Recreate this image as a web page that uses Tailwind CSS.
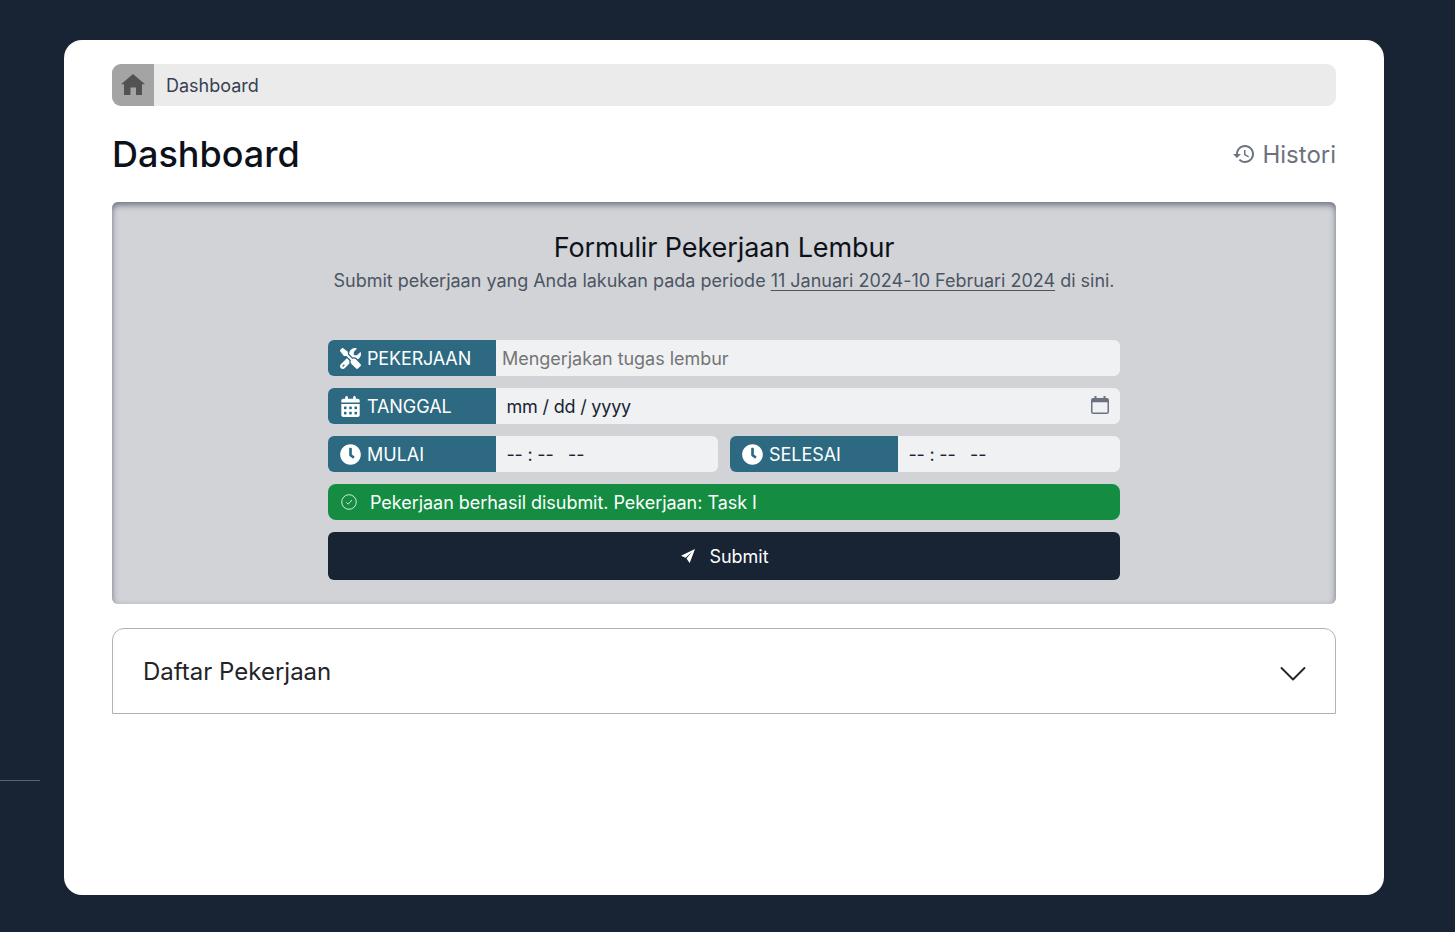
<!DOCTYPE html>
<html lang="id"><head><meta charset="utf-8"><title>Dashboard</title>
<script src="https://cdn.jsdelivr.net/npm/@tailwindcss/browser@4"></script></head>
<body class="h-[932px] overflow-hidden bg-[#182433] font-['Inter',sans-serif] text-[18px] leading-[27px]">
<div class="flex">
<aside class="flex w-16 shrink-0 flex-col pt-[780px]"><div class="h-px w-10 bg-[#5b6570]"></div></aside>
<main class="mt-10 h-[855px] w-[1320px] rounded-[18px] bg-white px-12 pt-6">
  <nav class="flex h-[42px] overflow-hidden rounded-[9px] bg-[#ebebeb] text-[#374151]">
    <div class="flex w-[42px] items-center justify-center bg-[#a4a4a4]">
      <svg class="size-6" viewBox="0 0 24 24" fill="#525252"><path d="M3 22V11.300H0L12 1 24 11.300h-3V22h-6v-7.500H9.500V22z"/></svg>
    </div>
    <span class="flex items-center pl-3">Dashboard</span>
  </nav>
  <header class="flex h-24 items-center justify-between">
    <h1 class="text-[36px] leading-[40px] font-medium text-[#0d121a]">Dashboard</h1>
    <a class="flex items-center gap-1.5 text-[24px] leading-8 text-[#6b7280]">
      <svg class="size-6" viewBox="0 0 24 24" fill="currentColor"><path d="M13 3c-4.970 0-9 4.030-9 9H1l3.890 3.890.070.140L9 12H6c0-3.870 3.130-7 7-7s7 3.130 7 7-3.130 7-7 7c-1.930 0-3.680-.790-4.940-2.060l-1.420 1.420C8.270 19.990 10.510 21 13 21c4.970 0 9-4.030 9-9s-4.030-9-9-9zm-1 5v5l4.280 2.540.720-1.210-3.500-2.080V8H12z"/></svg>
      <span class="pt-0.5">Histori</span></a>
  </header>
  <section class="flex h-[402px] flex-col items-center rounded-md bg-[#d2d3d7] pt-[31px] shadow-[inset_0_3px_6px_#6b7280]">
    <h2 class="text-[27px] leading-[30px] tracking-[-0.1px] text-[#0d121a]">Formulir Pekerjaan Lembur</h2>
    <p class="mt-1 tracking-[-0.01px] text-[#4b5563]">Submit pekerjaan yang Anda lakukan pada periode <span class="underline decoration-1 underline-offset-[3px]">11 Januari 2024-10 Februari 2024</span> di sini.</p>
    <form class="mt-[46px] flex w-[792px] flex-col gap-3">
      <div class="flex h-9 overflow-hidden rounded-md bg-[#f0f1f3]">
        <label class="flex w-[168px] items-center gap-1.5 bg-[#2d6a82] pl-3 tracking-[-0.15px] text-white">
          <svg class="size-[21px]" viewBox="0 0 512 512" fill="currentColor"><path d="M78.600 5C69.100-2.400 55.600-1.500 47 7L7 47c-8.500 8.500-9.400 22-2.100 31.600l80 104c4.500 5.900 11.600 9.400 19 9.400h54.100l109 109c-14.700 29-10 65.400 14.300 89.600l112 112c12.500 12.500 32.800 12.500 45.300 0l64-64c12.500-12.500 12.500-32.800 0-45.300l-112-112c-24.200-24.200-60.600-29-89.600-14.300l-109-109V104c0-7.500-3.500-14.500-9.400-19L78.600 5zM19.900 396.100C7.200 408.800 0 426.100 0 444.100C0 481.600 30.400 512 67.900 512c18 0 35.300-7.200 48-19.900L233.700 374.300c-7.800-20.900-9-43.600-3.600-65.100l-61.700-61.700L19.900 396.100zM512 144c0-10.500-1.100-20.700-3.200-30.500c-2.400-11.200-16.100-14.100-24.200-6l-63.900 63.900c-3 3-7.100 4.700-11.300 4.700H352c-8.800 0-16-7.200-16-16V102.600c0-4.200 1.700-8.300 4.700-11.300l63.900-63.900c8.100-8.100 5.200-21.800-6-24.200C388.700 1.100 378.500 0 368 0C288.500 0 224 64.500 224 144l0 .8 85.300 85.300c36-9.100 75.800 .5 104 28.700L429 274.500c49-23 83-72.800 83-130.500z"/><path d="M72 442l24-24" stroke="#2d6a82" stroke-width="34" stroke-linecap="round"/></svg>PEKERJAAN</label>
        <span class="flex items-center pl-1.5 tracking-[-0.04px] text-[#757575]">Mengerjakan tugas lembur</span>
      </div>
      <div class="flex h-9 overflow-hidden rounded-md bg-[#f0f1f3]">
        <label class="flex w-[168px] items-center gap-1.5 bg-[#2d6a82] pl-3 tracking-[-0.08px] text-white">
          <svg class="size-[21px]" viewBox="0 0 448 512" fill="currentColor"><path d="M128 0c17.700 0 32 14.300 32 32V64H288V32c0-17.700 14.300-32 32-32s32 14.300 32 32V64h48c26.500 0 48 21.500 48 48v48H0V112C0 85.500 21.500 64 48 64H96V32c0-17.700 14.300-32 32-32zM0 192H448V464c0 26.500-21.500 48-48 48H48c-26.500 0-48-21.500-48-48V192zm64 80v32c0 8.800 7.200 16 16 16h32c8.800 0 16-7.200 16-16V272c0-8.800-7.200-16-16-16H80c-8.800 0-16 7.200-16 16zm128 0v32c0 8.800 7.200 16 16 16h32c8.800 0 16-7.200 16-16V272c0-8.800-7.200-16-16-16H208c-8.800 0-16 7.200-16 16zm144-16c-8.800 0-16 7.200-16 16v32c0 8.800 7.200 16 16 16h32c8.800 0 16-7.200 16-16V272c0-8.800-7.200-16-16-16H336zM64 400v32c0 8.800 7.200 16 16 16h32c8.800 0 16-7.200 16-16V400c0-8.800-7.200-16-16-16H80c-8.800 0-16 7.200-16 16zm144-16c-8.800 0-16 7.200-16 16v32c0 8.800 7.200 16 16 16h32c8.800 0 16-7.200 16-16V400c0-8.800-7.200-16-16-16H208zm112 16v32c0 8.800 7.200 16 16 16h32c8.800 0 16-7.200 16-16V400c0-8.800-7.200-16-16-16H336c-8.800 0-16 7.200-16 16z"/></svg>TANGGAL</label>
        <div class="flex flex-1 items-center justify-between pr-[11px] pl-[10.500px] text-[#182433]"><span class="tracking-[-0.2px]">mm / dd / yyyy</span>
          <svg class="mb-0.5 h-[18px] w-[18px]" viewBox="0 0 18 18" fill="none" stroke="#6b7280"><rect x=".75" y="2.750" width="16.500" height="14.500" rx="1.500" stroke-width="1.500"/><path d="M1 4.500h16" stroke-width="3.500"/><path d="M4.500 0v3M13.500 0v3" stroke-width="2"/></svg></div>
      </div>
      <div class="grid grid-cols-2 gap-3">
        <div class="flex h-9 overflow-hidden rounded-md bg-[#f0f1f3]">
          <label class="flex w-[168px] items-center gap-1.5 bg-[#2d6a82] pl-3 text-white">
            <svg class="size-[21px]" viewBox="4 4 504 504" fill="currentColor"><path d="M256,8C119,8,8,119,8,256S119,504,256,504,504,393,504,256,393,8,256,8Zm92.490,313h0l-20,25a16,16,0,0,1-22.490,2.500h0l-67-49.720a40,40,0,0,1-15-31.230V112a16,16,0,0,1,16-16h32a16,16,0,0,1,16,16V256l58,42.500A16,16,0,0,1,348.490,321Z"/></svg>MULAI</label>
          <span class="flex items-center pl-[10.500px] tracking-[-0.2px] whitespace-pre text-[#182433]">-- : --   --</span>
        </div>
        <div class="flex h-9 overflow-hidden rounded-md bg-[#f0f1f3]">
          <label class="flex w-[168px] items-center gap-1.5 bg-[#2d6a82] pl-3 tracking-[-0.05px] text-white">
            <svg class="size-[21px]" viewBox="4 4 504 504" fill="currentColor"><path d="M256,8C119,8,8,119,8,256S119,504,256,504,504,393,504,256,393,8,256,8Zm92.490,313h0l-20,25a16,16,0,0,1-22.490,2.500h0l-67-49.720a40,40,0,0,1-15-31.230V112a16,16,0,0,1,16-16h32a16,16,0,0,1,16,16V256l58,42.500A16,16,0,0,1,348.490,321Z"/></svg>SELESAI</label>
          <span class="flex items-center pl-[10.500px] tracking-[-0.2px] whitespace-pre text-[#182433]">-- : --   --</span>
        </div>
      </div>
      <div class="flex h-9 items-center gap-[13px] rounded-lg bg-[#148d42] pl-[13px] text-white">
        <svg class="size-4" viewBox="0 0 16 16" fill="none" stroke="currentColor" stroke-width=".8"><circle cx="8" cy="8" r="7.300"/><path d="M5.300 8.300l1.900 1.900L10.900 6"/></svg>
        <span class="tracking-[-0.04px]">Pekerjaan berhasil disubmit. Pekerjaan: Task I</span>
      </div>
      <div class="flex h-12 items-center justify-center gap-[14px] rounded-md bg-[#182433] pl-0.5 text-white">
        <svg class="size-[14px]" viewBox="0 0 14 14" fill="currentColor"><path d="M14 0L0 6.800l4.500 1.900L11 3 5.500 9.400 8.700 14z"/></svg>
        <span>Submit</span>
      </div>
    </form>
  </section>
  <section class="mt-6 flex h-[86px] items-center justify-between rounded-t-xl border border-[#b0b1ba] pr-[29px] pl-[30px] text-[24px] text-[#212529]">
    <span>Daftar Pekerjaan</span>
    <svg class="mt-1.5 h-[26px] w-[26px]" viewBox="0 0 26 26" fill="none" stroke="currentColor" stroke-width="1.900" stroke-linecap="round" stroke-linejoin="round"><path d="M1.500 7L13 18.500 24.500 7"/></svg>
  </section>
</main>
</div>
</body></html>
